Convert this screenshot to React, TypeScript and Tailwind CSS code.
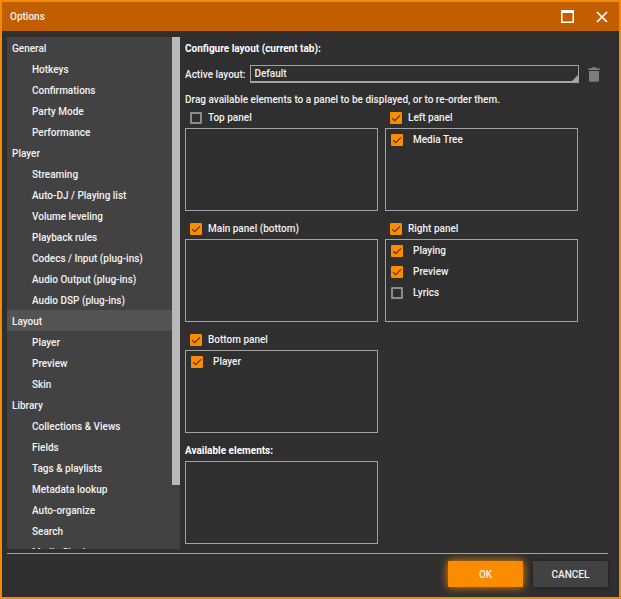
import { useState } from "react";

interface Section {
  title: string;
  pages: string[];
}

interface PanelItem {
  name: string;
  on: boolean;
}

const sections: Section[] = [
  {
    title: "General",
    pages: ["Hotkeys", "Confirmations", "Party Mode", "Performance"],
  },
  {
    title: "Player",
    pages: [
      "Streaming",
      "Auto-DJ / Playing list",
      "Volume leveling",
      "Playback rules",
      "Codecs / Input (plug-ins)",
      "Audio Output (plug-ins)",
      "Audio DSP (plug-ins)",
    ],
  },
  { title: "Layout", pages: ["Player", "Preview", "Skin"] },
  {
    title: "Library",
    pages: [
      "Collections & Views",
      "Fields",
      "Tags & playlists",
      "Metadata lookup",
      "Auto-organize",
      "Search",
      "Media Sharing",
    ],
  },
];

function Checkbox({ id, on }: { id: string; on: boolean }) {
  return (
    <span className="relative block size-3 shrink-0">
      <input
        id={id}
        type="checkbox"
        defaultChecked={on}
        className="peer block size-3 appearance-none rounded-[1px] border-2 border-[#8c8c8c] checked:border-[#fb8c00] checked:bg-[#fb8c00]"
      />
      <svg
        viewBox="0 0 12 12"
        className="pointer-events-none absolute inset-0 hidden size-3 fill-none stroke-[#5c3608] peer-checked:block"
      >
        <path d="M2.2 6.2 4.7 8.6 10 3.4" strokeWidth="1.3" />
      </svg>
    </span>
  );
}

function Panel({
  title,
  on,
  items = [],
}: {
  title: string;
  on: boolean;
  items?: PanelItem[];
}) {
  return (
    <section>
      <div className="flex h-[21px] items-center gap-1.5 pl-[5px]">
        <Checkbox id={title} on={on} />
        <label htmlFor={title}>{title}</label>
      </div>
      <ul className="h-[83px] border border-[#a3a3a3] pl-[5px]">
        {items.map((item) => (
          <li key={item.name} className="flex h-[21px] items-center gap-2.5">
            <Checkbox id={title + item.name} on={item.on} />
            <label htmlFor={title + item.name}>{item.name}</label>
          </li>
        ))}
      </ul>
    </section>
  );
}

function Sidebar() {
  const [active, setActive] = useState("Layout");

  return (
    <nav className="flex w-[173px] shrink-0 overflow-hidden bg-[#424242]">
      <div className="flex-1">
        {sections.map((section) => (
          <div key={section.title}>
            <button
              onClick={() => setActive(section.title)}
              className={`block h-[21px] w-full pt-px pl-[5px] text-left ${
                active === section.title ? "bg-[#535353]" : ""
              }`}
            >
              {section.title}
            </button>
            {section.pages.map((page) => (
              <button
                key={page}
                onClick={() => setActive(section.title + "/" + page)}
                className={`block h-[21px] w-full pt-px pl-[25px] text-left ${
                  active === section.title + "/" + page ? "bg-[#535353]" : ""
                }`}
              >
                {page}
              </button>
            ))}
          </div>
        ))}
      </div>
      {/* scroll thumb */}
      <div className="h-7/8 w-2 bg-[#b8b8b8]" />
    </nav>
  );
}

export default function App() {
  return (
    <div className="flex h-screen flex-col border-2 border-[#f28a05] bg-[#2f2f2f] font-['Roboto',sans-serif] text-[10px] font-medium text-[#f2f2f2]">
      <header className="flex h-[29px] shrink-0 items-center bg-[#c25e00] pr-[11px] pl-2">
        <h1 className="flex-1">Options</h1>
        <button aria-label="Maximize" className="mr-[22px]">
          <svg viewBox="0 0 13 13" className="size-[13px] fill-none stroke-white">
            <path d="M.75 1v11.25h11.5V1" strokeWidth="1.5" />
            <path d="M0 1.5h13" strokeWidth="3" />
          </svg>
        </button>
        <button aria-label="Close">
          <svg viewBox="0 0 12 12" className="size-3 fill-none stroke-white">
            <path d="M1 1l10 10M11 1 1 11" strokeWidth="1.7" />
          </svg>
        </button>
      </header>

      <div className="mx-[5px] mt-1.5 flex min-h-0 flex-1">
        <Sidebar />
        <main className="min-w-0 flex-1 pr-3.5 pl-[5px]">
          <h2 className="mt-[3px] h-[18px] leading-[18px] font-bold text-white">
            Configure layout (current tab):
          </h2>
          <div className="mt-[7px] flex items-center">
            <label htmlFor="active-layout">Active layout:</label>
            <div className="relative ml-[5px] flex-1">
              <select
                id="active-layout"
                className="block h-[18px] w-full appearance-none border border-b-2 border-[#a3a3a3] bg-transparent pl-[3px] leading-[15px]"
              >
                <option>Default</option>
              </select>
              <svg
                viewBox="0 0 7 7"
                className="pointer-events-none absolute right-0 bottom-0.5 size-[7px] fill-[#a3a3a3]"
              >
                <path d="M7 0v7H0z" />
              </svg>
            </div>
            <button aria-label="Delete layout" className="ml-[9px]">
              <svg viewBox="0 0 12 15" className="h-[15px] w-3 fill-[#7d7d7d]">
                <path d="M1 4h10v9.2c0 .9-.7 1.6-1.6 1.6H2.6C1.700 14.800 1 14.100 1 13.200zM.3 1.200h3l.9-.9h3.600l.9.9h3v1.700H.3z" />
              </svg>
            </button>
          </div>

          <div className="mr-[22px]">
            <p className="mt-2.5 leading-[14px]">
              Drag available elements to a panel to be displayed, or to re-order
              them.
            </p>
            <div className="grid grid-cols-2 gap-[7px]">
              <Panel title="Top panel" on={false} />
              <Panel
                title="Left panel"
                on
                items={[{ name: "Media Tree", on: true }]}
              />
              <Panel title="Main panel (bottom)" on />
              <Panel
                title="Right panel"
                on
                items={[
                  { name: "Playing", on: true },
                  { name: "Preview", on: true },
                  { name: "Lyrics", on: false },
                ]}
              />
              <Panel
                title="Bottom panel"
                on
                items={[{ name: "Player", on: true }]}
              />
              <section className="col-start-1">
                <h2 className="h-[21px] leading-[21px] font-bold text-white">
                  Available elements:
                </h2>
                <div className="h-[83px] border border-[#a3a3a3]" />
              </section>
            </div>
          </div>
        </main>
      </div>

      <footer className="mr-[11px] mt-1 mb-2.5 ml-[5px] flex justify-end gap-2.5 border-t border-[#a3a3a3] pt-[7px]">
        <button className="h-[26px] w-[75px] rounded-[1px] bg-[#fb8c00] shadow-[0_0_8px_#fb8c00]">
          OK
        </button>
        <button className="h-[26px] w-[75px] rounded-[1px] bg-[#424242] shadow-[0_0_4px_#1c1c1c]">
          CANCEL
        </button>
      </footer>
    </div>
  );
}
